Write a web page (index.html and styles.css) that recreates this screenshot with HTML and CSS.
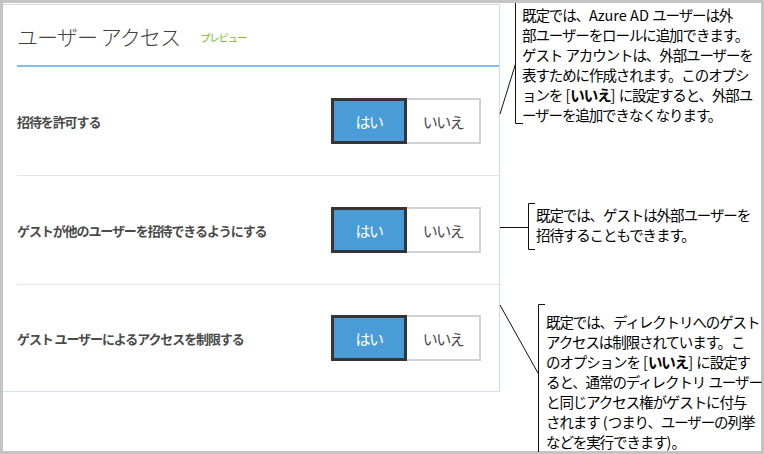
FILE: index.html
```html
<!DOCTYPE html>
<html lang="ja">
<head>
<meta charset="utf-8">
<title>ユーザー アクセス</title>
<link rel="stylesheet" href="styles.css">
</head>
<body>
<div class="page">
  <div class="frame">
    <section class="panel">
      <header class="panel-head">
        <h1 class="title">ユーザー アクセス</h1>
        <span class="badge">プレビュー</span>
      </header>
      <div class="row">
        <span class="label">招待を許可する</span>
        <div class="toggle"><span class="opt opt-on">はい</span><span class="opt opt-off">いいえ</span></div>
      </div>
      <div class="row">
        <span class="label">ゲストが他のユーザーを招待できるようにする</span>
        <div class="toggle"><span class="opt opt-on">はい</span><span class="opt opt-off">いいえ</span></div>
      </div>
      <div class="row row-last">
        <span class="label">ゲスト ユーザーによるアクセスを制限する</span>
        <div class="toggle"><span class="opt opt-on">はい</span><span class="opt opt-off">いいえ</span></div>
      </div>
    </section>
  </div>

  <svg class="leaders" width="764" height="454" viewBox="0 0 764 454" aria-hidden="true">
    <g stroke="#111" stroke-width="1" fill="none">
      <polyline points="515.5,3 515.5,123.5 523,123.5"/>
      <line x1="500" y1="114" x2="515.5" y2="64"/>
      <polyline points="535,203.5 528.5,203.5 528.5,249.5 535,249.5"/>
      <line x1="500" y1="227.5" x2="528.5" y2="227.5"/>
      <polyline points="545,304.5 538.5,304.5 538.5,452"/>
      <line x1="500" y1="305" x2="538.5" y2="374"/>
    </g>
  </svg>

  <p class="note note-1">既定では、<span class="lat">Azure AD </span>ユーザーは外<br>部ユーザーをロールに追加できます。<br>ゲスト<span class="lat"> </span>アカウントは、外部ユーザーを<br>表すために作成されます。このオプシ<br>ョンを<span class="lat"> [</span><b>いいえ</b><span class="lat">] </span>に設定すると、外部ユ<br>ーザーを追加できなくなります。</p>
  <p class="note note-2">既定では、ゲストは外部ユーザーを<br>招待することもできます。</p>
  <p class="note note-3">既定では、ディレクトリへのゲスト<br>アクセスは制限されています。こ<br>のオプションを<span class="lat"> [</span><b>いいえ</b><span class="lat">] </span>に設定す<br>ると、通常のディレクトリ<span class="lat"> </span>ユーザー<br>と同じアクセス権がゲストに付与<br>されます<span class="lat"> (</span>つまり、ユーザーの列挙<br>などを実行できます<span class="lat">)</span>。</p>
</div>
</body>
</html>
```

FILE: styles.css
```css
* { box-sizing: border-box; }

html, body {
  margin: 0;
  padding: 0;
  background: #ffffff;
}

body {
  font-family: "Noto Sans CJK JP", "Noto Sans", sans-serif;
  color: #444444;
}

.page {
  position: relative;
  width: 764px;
  height: 454px;
  overflow: hidden;
}

.frame {
  width: 764px;
  height: 454px;
  border: 3px solid #c4c4c4;
  background: #ffffff;
  display: flex;
  align-items: flex-start;
}

.panel {
  margin-top: 1px;
  width: 497px;
  height: 388px;
  border-top: 1px solid #cddcee;
  border-right: 1px solid #cddcee;
  border-bottom: 1px solid #d6dfea;
  padding-left: 14px;
  display: flex;
  flex-direction: column;
  background: #ffffff;
}

.panel-head {
  height: 62px;
  flex: none;
  border-bottom: 2px solid #85bbe7;
  display: flex;
  align-items: baseline;
  padding-top: 16px;
}

.title {
  margin: 0;
  font-size: 21px;
  font-weight: 300;
  letter-spacing: -0.9px;
  line-height: 30px;
  color: #424242;
}

.badge {
  margin-left: 20px;
  font-size: 10.5px;
  letter-spacing: -1.3px;
  color: #7cba2c;
  position: relative;
  top: -3px;
}

.row {
  height: 109px;
  flex: none;
  border-bottom: 1px solid #e3e3e3;
  display: flex;
  align-items: center;
  justify-content: space-between;
  padding-right: 18px;
}

.row-last {
  flex: 1;
  height: auto;
  border-bottom: none;
}

.label {
  font-size: 13px;
  font-weight: 700;
  letter-spacing: -1.1px;
  color: #4a4a4a;
}

.toggle {
  display: flex;
  height: 46px;
  width: 150px;
}

.opt {
  display: flex;
  align-items: center;
  justify-content: center;
  height: 46px;
  font-size: 15px;
  letter-spacing: -1.5px;
}

.opt-on {
  width: 76px;
  background: #4a9cd6;
  border: 3px solid #353535;
  color: #ffffff;
}

.opt-off {
  width: 74px;
  background: #ffffff;
  border: 2px solid #d2d2d2;
  border-left: none;
  color: #474747;
}

.leaders {
  position: absolute;
  left: 0;
  top: 0;
}

.note {
  position: absolute;
  margin: 0;
  font-size: 14.5px;
  line-height: 20px;
  letter-spacing: -1.1px;
  color: #000000;
  white-space: nowrap;
}

.note b {
  font-weight: 700;
}

.note .lat {
  letter-spacing: 0;
}

.note-1 { left: 522px; top: 5px; }
.note-2 { left: 536px; top: 205px; }
.note-3 { left: 546px; top: 312px; }
```
